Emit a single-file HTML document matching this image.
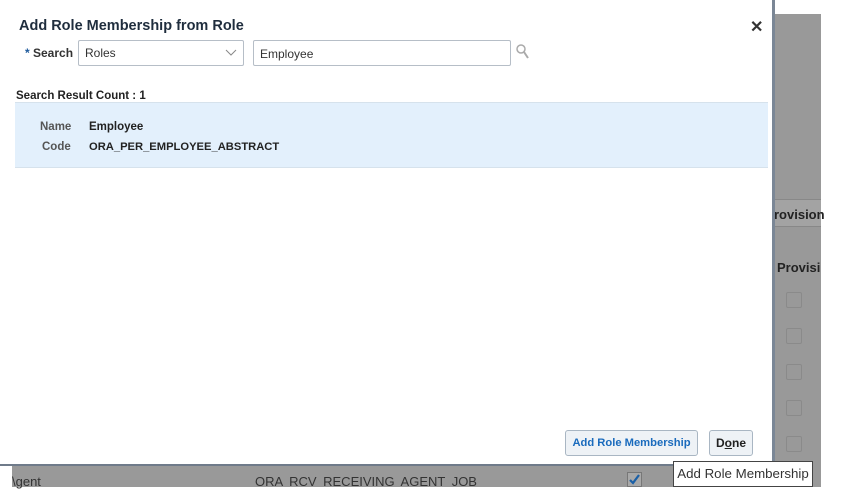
<!DOCTYPE html><html><head><style>
body{margin:0;width:849px;height:498px;background:#fff;position:relative;overflow:hidden;font-family:"Liberation Sans",Arial,sans-serif;}
.a{position:absolute}
.b{font-weight:bold}
.cb{position:absolute;left:786px;width:14px;height:14px;border:1px solid #8a8a8a;border-radius:2px;}
</style></head><body>
<div class="a" style="left:12px;top:14px;width:809px;height:473px;background:#999;"></div>
<div class="a" style="left:774px;top:199px;width:47px;height:26px;background:#a3a3a3;border-top:1px solid #888;border-bottom:1px solid #888;"></div>
<div class="a b" style="left:774px;top:207px;font-size:13px;color:#222;">rovision</div>
<div class="a b" style="left:777px;top:260px;font-size:13px;color:#222;">Provisi</div>
<div class="cb" style="top:292px"></div><div class="cb" style="top:328px"></div><div class="cb" style="top:364px"></div><div class="cb" style="top:400px"></div><div class="cb" style="top:436px"></div>
<div class="a" style="left:12px;top:474px;font-size:13px;color:#333;">\gent</div>
<div class="a" style="left:255px;top:474px;font-size:13px;color:#333;word-spacing:3px;">ORA RCV RECEIVING AGENT JOB</div>
<div class="a" style="left:627px;top:472px;width:13px;height:13px;border:1px solid #777;background:#a8a8a8;"></div>
<svg class="a" style="left:628px;top:473px" width="13" height="13"><path d="M2 7 L5 10 L11 2" stroke="#1a5fa6" stroke-width="2.2" fill="none"/></svg>
<div class="a" style="left:0;top:0;width:772px;height:464px;background:#fff;border-right:3px solid #7b8796;border-bottom:2px solid #6f7b8a;"></div>
<div class="a b" style="left:19px;top:18px;font-size:14.5px;color:#1f2d3d;">Add Role Membership from Role</div>
<div class="a" style="left:750px;top:17px;font-size:16px;font-weight:bold;color:#333;">✕</div>
<div class="a b" style="left:25px;top:46px;font-size:12px;color:#333;"><span style="color:#1e5a9c">*</span> Search</div>
<div class="a" style="left:78px;top:40px;width:164px;height:24px;border:1px solid #b6bec7;border-radius:2px;"></div>
<div class="a" style="left:85px;top:46px;font-size:12px;color:#333;">Roles</div>
<svg class="a" style="left:225px;top:49px" width="12" height="8"><path d="M1 1 L6 6 L11 1" stroke="#888" fill="none"/></svg>
<div class="a" style="left:253px;top:40px;width:256px;height:24px;border:1px solid #b6bec7;border-radius:2px;"></div>
<div class="a" style="left:260px;top:47px;font-size:12px;color:#333;">Employee</div>
<svg class="a" style="left:515px;top:43px" width="16" height="18"><circle cx="6" cy="6" r="4" stroke="#aaa" stroke-width="1.5" fill="none"/><path d="M9 9 L13 15" stroke="#aaa" stroke-width="2"/></svg>
<div class="a b" style="left:16px;top:90px;font-size:11.5px;color:#222;">Search Result Count : 1</div>
<div class="a" style="left:15px;top:102px;width:753px;height:64px;background:#e3f0fc;border-top:1px solid #d6e2ec;border-bottom:1px solid #d6e2ec;"></div>
<div class="a b" style="left:40px;top:121px;font-size:11.5px;color:#555;">Name</div>
<div class="a b" style="left:42px;top:141px;font-size:11.5px;color:#555;">Code</div>
<div class="a b" style="left:89px;top:121px;font-size:11.5px;color:#222;">Employee</div>
<div class="a b" style="left:89px;top:141px;font-size:11.2px;color:#222;">ORA_PER_EMPLOYEE_ABSTRACT</div>
<div class="a b" style="left:565px;top:430px;width:131px;height:24px;border:1px solid #a9b6c3;border-radius:3px;background:#eef2f6;color:#1a6bbd;font-size:11.2px;line-height:24px;text-align:center;">Add Role Membership</div>
<div class="a b" style="left:709px;top:430px;width:42px;height:24px;border:1px solid #a9b6c3;border-radius:3px;background:#eef2f6;color:#222;font-size:12px;line-height:24px;text-align:center;">D<u>o</u>ne</div>
<div class="a" style="left:673px;top:461px;width:138px;height:24px;border:1px solid #444;background:#fff;font-size:13.3px;line-height:24px;color:#333;text-align:center;">Add Role Membership</div>
</body></html>
